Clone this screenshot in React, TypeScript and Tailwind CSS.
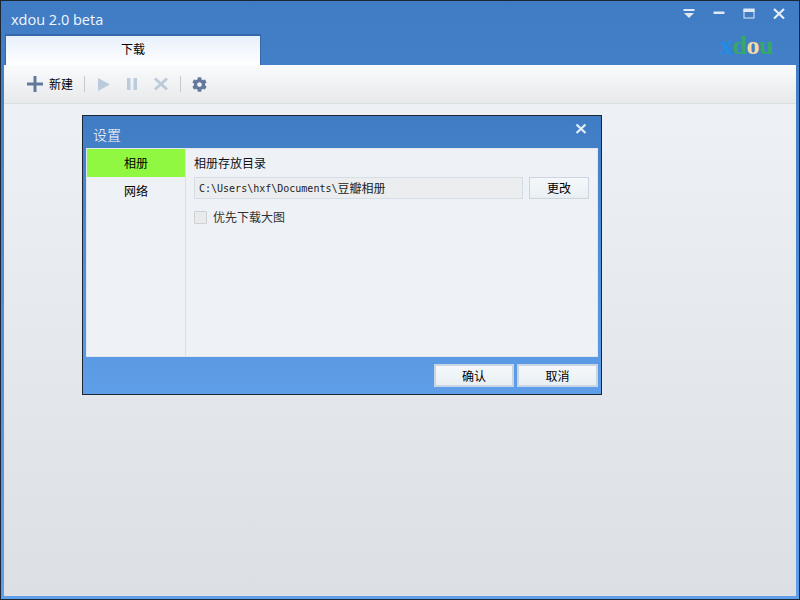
import { FC, ReactNode } from "react";
import { FaCog } from "react-icons/fa";

const cjk = "font-['Noto_Sans_CJK_SC','Liberation_Sans',sans-serif]";

const Separator: FC = () => <div className="w-px h-[16px] bg-[#c3c9cf]" />;

const ToolIcon: FC<{ children: ReactNode; className?: string }> = ({ children, className }) => (
  <svg width="16" height="16" viewBox="0 0 16 16" className={className}>
    {children}
  </svg>
);

const DialogButton: FC<{ label: string; className: string }> = ({ label, className }) => (
  <button
    className={`${className} flex items-center justify-center border-2 border-[#c9d5e3] bg-gradient-to-b from-[#f5f8fa] to-[#e8eff3] text-[12px] text-black ${cjk}`}
  >
    {label}
  </button>
);

const WindowButtons: FC = () => (
  <div className="flex items-start gap-[18px] pt-[7px] pr-[14px]">
    <svg width="12" height="12" viewBox="0 0 12 12" fill="#dfe9f6">
      <rect x="0.5" y="1" width="11" height="2" />
      <path d="M1 5h10L6 10z" />
    </svg>
    <svg width="12" height="12" viewBox="0 0 12 12" fill="#dfe9f6">
      <rect x="0.5" y="3.500" width="11" height="2.500" rx="0.5" />
    </svg>
    <svg width="12" height="12" viewBox="0 0 12 12" fill="none" stroke="#dfe9f6">
      <rect x="1" y="1" width="10" height="9" />
      <rect x="1" y="1.500" width="10" height="2" fill="#dfe9f6" />
    </svg>
    <svg width="12" height="12" viewBox="0 0 12 12" stroke="#e6eef8" strokeWidth="2.2">
      <path d="M1 1l10 9.500M11 1L1 10.500" />
    </svg>
  </div>
);

const SettingsDialog: FC = () => (
  <div className="absolute left-[81px] top-[114px] w-[520px] h-[280px] border border-[#1d2733] bg-gradient-to-b from-[#3f7cc4] to-[#5f9ee8] flex flex-col px-[3px]">
    <div className="h-[32px] flex items-center justify-between pl-[7px] pr-[11px] shrink-0">
      <span className={`${cjk} text-[14px] text-white font-light pt-[5px]`}>设置</span>
      <svg width="12" height="12" viewBox="0 0 12 12" stroke="#e6eef8" strokeWidth="2.2" className="mb-[7px]">
        <path d="M1.500 1.500l9 8.500M10.500 1.500l-9 8.500" />
      </svg>
    </div>
    <div className="flex-1 flex bg-[#eef2f7] border border-[#dfe6ee]">
      <div className="w-[99px] border-r border-[#d6dfe6] shrink-0">
        <div className={`${cjk} h-[28px] bg-[#90f840] flex items-center justify-center text-[12px] text-black`}>相册</div>
        <div className={`${cjk} h-[28px] flex items-center justify-center text-[12px] text-black`}>网络</div>
      </div>
      <div className="flex-1 pl-[8px] pr-[8px] pt-[5px]">
        <div className={`${cjk} text-[12px] leading-[18px] text-[#111]`}>相册存放目录</div>
        <div className="flex gap-[6px] mt-[5px]">
          <div className="w-[329px] h-[22px] border border-[#d5dee4] bg-[#ebedef] pl-[4px] flex items-center text-[10px] text-[#222] font-['DejaVu_Sans_Mono',monospace] whitespace-pre">
            C:\Users\hxf\Documents\
            <span className={`${cjk} text-[12px]`}>豆瓣相册</span>
          </div>
          <button className={`${cjk} w-[60px] h-[22px] flex items-center justify-center border border-[#cbd5e0] bg-gradient-to-b from-[#f5f8fa] to-[#e8eff3] text-[12px] text-black`}>
            更改
          </button>
        </div>
        <div className="flex items-center gap-[6px] mt-[9px]">
          <div className="w-[13px] h-[13px] rounded-[1px] border border-[#cfd2d4] bg-[#e9eaeb]" />
          <span className={`${cjk} text-[12px] leading-[18px] text-[#333]`}>优先下载大图</span>
        </div>
      </div>
    </div>
    <div className="h-[37px] flex items-start justify-end gap-[3px] pt-[7px] shrink-0">
      <DialogButton label="确认" className="w-[80px] h-[23px]" />
      <DialogButton label="取消" className="w-[81px] h-[23px]" />
    </div>
  </div>
);

export default function App() {
  return (
    <div className="relative w-[800px] h-[600px] overflow-hidden border border-[#1d2733] bg-gradient-to-b from-[#3f7cc4] to-[#5f9ee8] flex flex-col">
      {/* title bar */}
      <div className="h-[33px] flex justify-between shrink-0">
        <span className="font-['Open_Sans',sans-serif] text-[14.5px] leading-[18px] text-[#f2f6fb] pl-[10px] pt-[10px]">xdou 2.0 beta</span>
        <WindowButtons />
      </div>
      {/* tab row */}
      <div className="relative h-[31px] pl-[4px] shrink-0">
        <div className={`${cjk} w-[256px] h-[31px] pb-[3px] border-t-2 border-l border-r border-[#3568a8] border-b-0 bg-gradient-to-b from-[#e8f0fb] to-white flex items-center justify-center text-[12px] text-black`}>
          下载
        </div>
        <div className="absolute left-[719px] top-[-3px] font-['Liberation_Serif',serif] font-bold text-[26px] leading-[30px] tracking-[-0.5px] whitespace-nowrap">
          <span className="text-[#1c8de8]">x</span>
          <span className="text-[#36a86a]">d</span>
          <span className="text-[#f7d9a4]">o</span>
          <span className="text-[#36a86a]">u</span>
        </div>
      </div>
      {/* content */}
      <div className="flex-1 mx-[3px] mb-[3px] flex flex-col bg-gradient-to-b from-[#eff2f7] to-[#dcdfe4]">
        <div className="h-[39px] shrink-0 flex items-center pl-[23px] border-b border-[#d5dee2] bg-gradient-to-b from-[#fafbfc] to-[#e7e9eb]">
          <ToolIcon className="mr-[6px]">
            <path d="M6.500 0h3v6.500H16v3H9.500V16h-3V9.500H0v-3h6.500z" fill="#62799c" />
          </ToolIcon>
          <span className={`${cjk} text-[12px] text-black mr-[11px]`}>新建</span>
          <Separator />
          <ToolIcon className="ml-[11px]">
            <path d="M2 2l12 6.500L2 15z" fill="#bccbdb" />
          </ToolIcon>
          <ToolIcon className="ml-[12px]">
            <path d="M3 2h3.500v12H3zM9.500 2H13v12H9.500z" fill="#bccbdb" />
          </ToolIcon>
          <ToolIcon className="ml-[13px]">
            <path d="M2 2.500l12 11M14 2.500l-12 11" stroke="#bccbdb" strokeWidth="3" />
          </ToolIcon>
          <div className="ml-[11px]">
            <Separator />
          </div>
          <FaCog className="ml-[11px] text-[#62799c]" size={15} />
        </div>
        <div className="flex-1" />
      </div>
      <SettingsDialog />
    </div>
  );
}
